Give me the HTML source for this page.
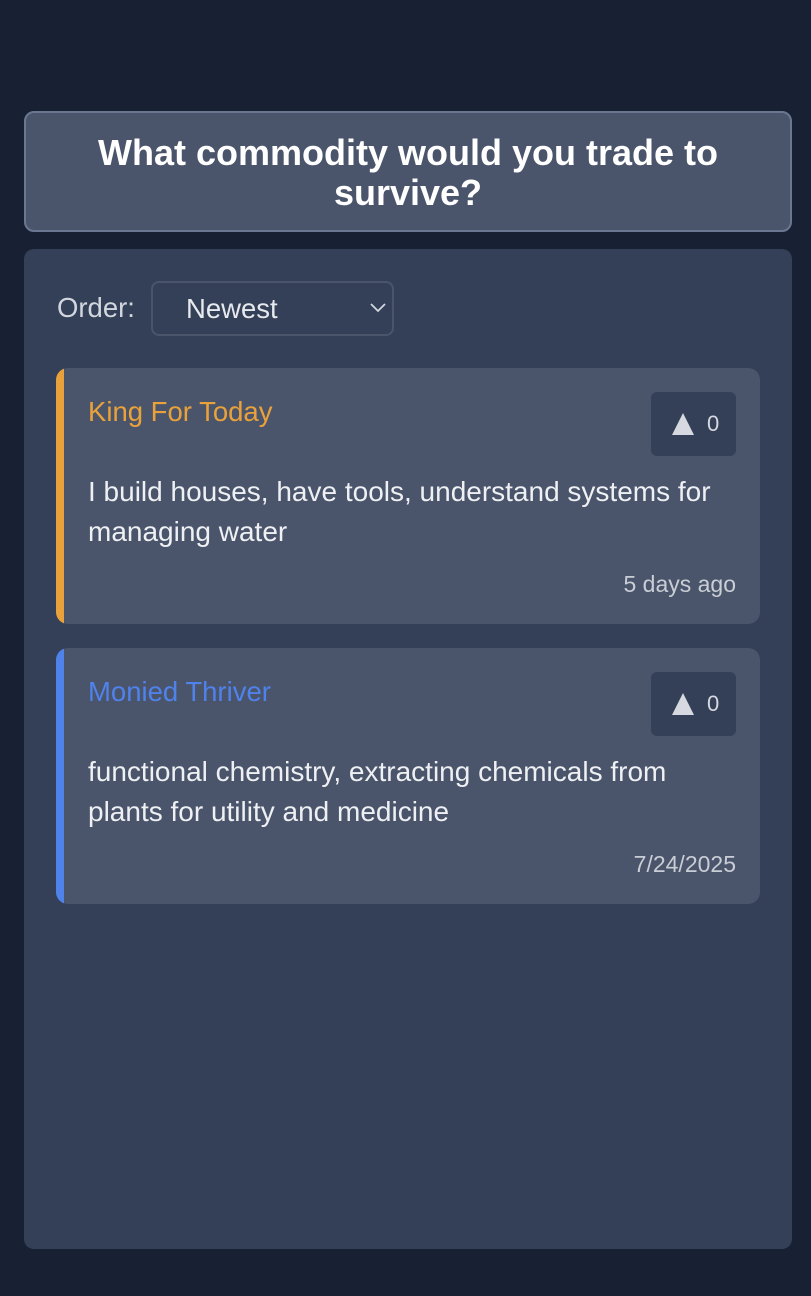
<!DOCTYPE html>
<html><head><style>
*{box-sizing:border-box;margin:0;padding:0}
body{width:811px;height:1296px;background:#182033;font-family:"Liberation Sans",sans-serif;position:relative;overflow:hidden}
.hdr{position:absolute;left:24px;top:111px;width:768px;height:121px;background:#4a556b;border:2px solid #6b7790;border-radius:10px;color:#fff;font-weight:bold;font-size:36px;line-height:40px;text-align:center;padding-top:20px}
.panel{position:absolute;left:24px;top:249px;width:768px;height:1000px;background:#344057;border-radius:10px}
.lbl{position:absolute;left:33px;top:43px;color:#d2d6de;font-size:27.5px}
.sel{position:absolute;left:127px;top:32px;width:243px;height:55px;border:2px solid #4a556b;border-radius:8px;color:#e6e9ee;font-size:27.5px;padding:10px 0 0 33px}
.sel svg{position:absolute;right:6px;top:20px}
.card{position:absolute;left:32px;width:704px;height:256px;background:#4a556b;border-radius:12px;overflow:hidden}
.bar{position:absolute;left:0;top:0;bottom:0;width:8px}
.name{position:absolute;left:32px;top:28px;font-size:27.5px}
.vote{position:absolute;left:595px;top:24px;width:85px;height:64px;background:#344057;border-radius:6px}
.tri{position:absolute;left:21px;top:21px;width:0;height:0;border-left:11px solid transparent;border-right:11px solid transparent;border-bottom:22px solid #d6d9e0}
.cnt{position:absolute;left:56px;top:19px;font-size:22px;color:#d6d9e0}
.txt{position:absolute;left:32px;top:104px;width:640px;font-size:28px;line-height:40px;color:#eef0f3}
.date{position:absolute;right:24px;top:203px;font-size:23px;color:#c9cdd5}
</style></head><body>
<div class="hdr">What commodity would you trade to<br>survive?</div>
<div class="panel">
<div class="lbl">Order:</div>
<div class="sel">Newest<svg width="16" height="10" viewBox="0 0 16 10"><path d="M1 1l7 7 7-7" stroke="#d2d6de" stroke-width="1.8" fill="none"/></svg></div>
<div class="card" style="top:119px"><div class="bar" style="background:#e9a23b"></div><div class="name" style="color:#e9a23b">King For Today</div><div class="vote"><div class="tri"></div><div class="cnt">0</div></div><div class="txt">I build houses, have tools, understand systems for managing water</div><div class="date">5 days ago</div></div>
<div class="card" style="top:399px"><div class="bar" style="background:#4f82eb"></div><div class="name" style="color:#4f82eb">Monied Thriver</div><div class="vote"><div class="tri"></div><div class="cnt">0</div></div><div class="txt">functional chemistry, extracting chemicals from plants for utility and medicine</div><div class="date">7/24/2025</div></div>
</div>
</body></html>
